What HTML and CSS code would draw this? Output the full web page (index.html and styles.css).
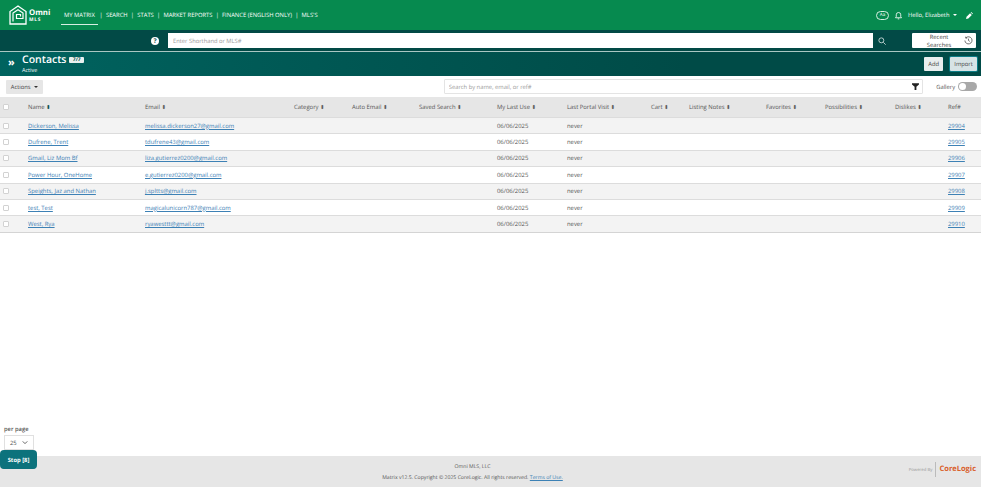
FILE: index.html
```html
<!DOCTYPE html>
<html lang="en">
<head>
  <meta charset="UTF-8" />
  <title>Contacts - Omni MLS</title>
  <link rel="stylesheet" href="styles.css">
</head>
<body>

  <!-- top nav -->
  <header class="topnav">
    <div class="logo">
      <svg class="logo-mark" viewBox="0 0 18 20" width="18" height="20" fill="none" stroke="#fff">
        <path d="M1 19V6.500L9 1l8 5.500V19Z" stroke-width="1.300"/>
        <path d="M4 16.500V8l5-3.300L14 8v5.500H7.500V9.500H11.500v2" stroke-width="1.200"/>
      </svg>
      <div class="logo-text">
        <span class="logo-omni">Omni</span>
        <span class="logo-mls">MLS</span>
      </div>
    </div>
    <nav class="mainmenu">
      <a class="active" href="#">MY MATRIX</a><i>|</i>
      <a href="#">SEARCH</a><i>|</i>
      <a href="#">STATS</a><i>|</i>
      <a href="#">MARKET REPORTS</a><i>|</i>
      <a href="#">FINANCE (ENGLISH ONLY)</a><i>|</i>
      <a href="#">MLS'S</a>
    </nav>
    <div class="usermenu">
      <span class="aa-pill">Aa</span>
      <svg viewBox="0 0 12 12" width="9" height="9" fill="none" stroke="#fff" stroke-width="1.100">
        <path d="M2 9h8L9 7.500V5a3 3 0 0 0-6 0v2.500Z"/>
        <path d="M5 10.500h2"/>
      </svg>
      <span class="hello">Hello, Elizabeth <b class="caret"></b></span>
      <svg class="pen" viewBox="0 0 12 12" width="7" height="7" fill="#fff">
        <path d="M0 12l1-4 6-6 3 3-6 6Z"/>
        <path d="M8 1l1-1 3 3-1 1Z"/>
      </svg>
    </div>
  </header>

  <!-- shorthand bar -->
  <div class="searchbar">
    <span class="help">?</span>
    <input class="shorthand" placeholder="Enter Shorthand or MLS#" />
    <svg class="lens" viewBox="0 0 12 12" width="8" height="8" fill="none" stroke="#cfdedd" stroke-width="1.300">
      <circle cx="5" cy="5" r="3.700"/>
      <path d="M8 8l3.500 3.500"/>
    </svg>
    <button class="recent">Recent Searches
      <svg viewBox="0 0 12 12" width="9" height="9" fill="none" stroke="#444" stroke-width="1">
        <path d="M2.500 2.500A4.800 4.800 0 1 1 1.200 6"/>
        <path d="M2.300 .8v2h2M6 3.500V6l1.800 1.200"/>
      </svg>
    </button>
  </div>

  <!-- title -->
  <section class="titlebar">
    <span class="chevrons">»</span>
    <div class="title-text">
      <h1>Contacts <span class="count">7/7</span></h1>
      <p>Active</p>
    </div>
    <div class="title-btns">
      <button class="btn-light">Add</button>
      <button class="btn-light btn-focus">Import</button>
    </div>
  </section>

  <div class="toolbar">
    <button class="actions">Actions <b class="caret caret-dark"></b></button>
    <div class="filterbox">
      <input placeholder="Search by name, email, or ref#" />
    </div>
    <svg class="funnel" viewBox="0 0 10 10" width="7" height="7" fill="#222">
      <path d="M0 .5h10v1.500L6.300 5.500V10H3.700V5.500L0 2Z"/>
    </svg>
    <span class="gallery-label">Gallery</span>
    <span class="toggle"><span class="knob"></span></span>
  </div>

  <main class="content">
    <table class="contacts">
      <colgroup>
        <col class="c-check"><col class="c-name"><col class="c-email"><col class="c-cat">
        <col class="c-auto"><col class="c-saved"><col class="c-use"><col class="c-portal">
        <col class="c-cart"><col class="c-notes"><col class="c-fav"><col class="c-poss">
        <col class="c-dis"><col class="c-ref">
      </colgroup>
      <thead>
        <tr>
          <th><span class="box"></span></th>
          <th>Name <span class="sort sort-on">⬍</span></th>
          <th>Email <span class="sort">⬍</span></th>
          <th>Category <span class="sort">⬍</span></th>
          <th>Auto Email <span class="sort">⬍</span></th>
          <th>Saved Search <span class="sort">⬍</span></th>
          <th>My Last Use <span class="sort">⬍</span></th>
          <th>Last Portal Visit <span class="sort">⬍</span></th>
          <th>Cart <span class="sort">⬍</span></th>
          <th>Listing Notes <span class="sort">⬍</span></th>
          <th>Favorites <span class="sort">⬍</span></th>
          <th>Possibilities <span class="sort">⬍</span></th>
          <th>Dislikes <span class="sort">⬍</span></th>
          <th>Ref#</th>
        </tr>
      </thead>
      <tbody>
        <tr>
          <td><span class="box"></span></td><td><a href="#">Dickerson, Melissa</a></td><td><a href="#">melissa.dickerson27@gmail.com</a></td>
          <td></td><td></td><td></td><td>06/06/2025</td><td>never</td><td></td><td></td><td></td><td></td><td></td><td><a href="#">29904</a></td>
        </tr>
        <tr>
          <td><span class="box"></span></td><td><a href="#">Dufrene, Trent</a></td><td><a href="#">tdufrene43@gmail.com</a></td>
          <td></td><td></td><td></td><td>06/06/2025</td><td>never</td><td></td><td></td><td></td><td></td><td></td><td><a href="#">29905</a></td>
        </tr>
        <tr>
          <td><span class="box"></span></td><td><a href="#">Gmail, Liz Mom Bf</a></td><td><a href="#">liza.gutierrez0200@gmail.com</a></td>
          <td></td><td></td><td></td><td>06/06/2025</td><td>never</td><td></td><td></td><td></td><td></td><td></td><td><a href="#">29906</a></td>
        </tr>
        <tr>
          <td><span class="box"></span></td><td><a href="#">Power Hour, OneHome</a></td><td><a href="#">e.gutierrez0200@gmail.com</a></td>
          <td></td><td></td><td></td><td>06/06/2025</td><td>never</td><td></td><td></td><td></td><td></td><td></td><td><a href="#">29907</a></td>
        </tr>
        <tr>
          <td><span class="box"></span></td><td><a href="#">Speights, Jaz and Nathan</a></td><td><a href="#">j.spltts@gmail.com</a></td>
          <td></td><td></td><td></td><td>06/06/2025</td><td>never</td><td></td><td></td><td></td><td></td><td></td><td><a href="#">29908</a></td>
        </tr>
        <tr>
          <td><span class="box"></span></td><td><a href="#">test, Test</a></td><td><a href="#">magicalunicorn787@gmail.com</a></td>
          <td></td><td></td><td></td><td>06/06/2025</td><td>never</td><td></td><td></td><td></td><td></td><td></td><td><a href="#">29909</a></td>
        </tr>
        <tr>
          <td><span class="box"></span></td><td><a href="#">West, Rya</a></td><td><a href="#">ryawesttt@gmail.com</a></td>
          <td></td><td></td><td></td><td>06/06/2025</td><td>never</td><td></td><td></td><td></td><td></td><td></td><td><a href="#">29910</a></td>
        </tr>
      </tbody>
    </table>

    <div class="perpage">
      <label>per page</label>
      <div class="perpage-select">25
        <svg viewBox="0 0 8 6" width="6" height="5" fill="none" stroke="#555" stroke-width="1.200"><path d="M1 1.500l3 3 3-3"/></svg>
      </div>
    </div>
  </main>

  <footer class="pagefoot">
    <span class="ghost">Matrix</span>
    <div class="foot-center">
      <p>Omni MLS, LLC</p>
      <p>Matrix v12.5. Copyright © 2025 CoreLogic. All rights reserved. <a href="#">Terms of Use.</a></p>
    </div>
    <div class="powered">
      <span class="powered-by">Powered By</span>
      <span class="corelogic">CoreLogic</span>
    </div>
  </footer>

  <button class="stop">Stop [8]</button>

</body>
</html>
```

FILE: styles.css
```css
/* RESET */
* {
  margin: 0;
  padding: 0;
  box-sizing: border-box;
}

html, body {
  width: 100%;
  height: 100%;
  overflow: hidden;
}

body {
  display: flex;
  flex-direction: column;
  position: relative;
  background-color: #fff;
  color: #555;
  font-family: "Open Sans", "Liberation Sans", sans-serif;
  font-size: 5.900px;
  text-rendering: geometricPrecision;
}

a {
  color: #3d81b5;
}

button, input {
  font-family: inherit;
  text-rendering: geometricPrecision;
}

.caret {
  display: inline-block;
  width: 0;
  height: 0;
  margin-left: 2px;
  vertical-align: middle;
  border-left: 2px solid transparent;
  border-right: 2px solid transparent;
  border-top: 2px solid #fff;
}
.caret-dark {
  border-top-color: #333;
}

/* TOP NAV */
.topnav {
  flex: 0 0 30px;
  display: flex;
  align-items: center;
  padding-left: 9px;
  padding-right: 8px;
  background-color: #068a4f;
  color: #fff;
}
.logo {
  display: flex;
  align-items: center;
  gap: 2px;
  width: 52px;
}
.logo-text {
  display: flex;
  flex-direction: column;
  line-height: 1;
  padding-top: 3px;
}
.logo-omni {
  font-size: 7.800px;
  font-weight: 700;
}
.logo-mls {
  font-size: 4.800px;
  font-weight: 700;
  letter-spacing: 0.8px;
}
.mainmenu {
  display: flex;
  align-items: center;
  font-size: 5.850px;
}
.mainmenu a {
  color: #fff;
  text-decoration: none;
  padding: 6px 0 5px;
  border-bottom: 1px solid transparent;
}
.mainmenu a.active {
  padding-left: 3px;
  padding-right: 3px;
  margin-right: -1.500px;
  border-bottom-color: #d6efe2;
}
.mainmenu i {
  font-style: normal;
  margin: 0 3.200px 1px;
}
.usermenu {
  margin-left: auto;
  display: flex;
  align-items: center;
  gap: 5px;
  font-size: 5.800px;
}
.aa-pill {
  width: 13px;
  height: 9px;
  border: 1px solid #d6efe2;
  border-radius: 5px;
  font-size: 4.500px;
  line-height: 7px;
  text-align: center;
}
.pen {
  margin-left: 4px;
}

/* SHORTHAND BAR */
.searchbar {
  flex: 0 0 22px;
  display: flex;
  align-items: center;
  padding-left: 151px;
  padding-right: 5px;
  background-color: #024a46;
  border-bottom: 1px solid #a9c7c3;
}
.help {
  width: 8px;
  height: 8px;
  margin-right: 9px;
  border-radius: 50%;
  background-color: #fff;
  color: #024a46;
  font-size: 6.500px;
  font-weight: 700;
  line-height: 8px;
  text-align: center;
}
.shorthand {
  width: 705px;
  height: 15px;
  padding-left: 5px;
  border: 0;
  font-size: 5.800px;
  background-color: #fff;
}
.shorthand::placeholder,
.filterbox input::placeholder {
  color: #9a9a9a;
  opacity: 1;
}
.lens {
  margin-left: 5px;
}
.recent {
  margin-left: auto;
  display: flex;
  align-items: center;
  gap: 3px;
  width: 64px;
  height: 15px;
  padding: 0 3px 0 5px;
  border: 0;
  border-radius: 1px;
  background-color: #fff;
  color: #444;
  font-size: 5.800px;
}

/* TITLE */
.titlebar {
  flex: 0 0 24px;
  display: flex;
  align-items: center;
  padding-left: 8px;
  padding-right: 4px;
  background: linear-gradient(to right, #00635f, #004b47 70%);
  color: #fff;
}
.chevrons {
  width: 14px;
  font-size: 11px;
  font-weight: 700;
  line-height: 1;
  margin-bottom: 4px;
}
.title-text h1 {
  font-size: 10.500px;
  font-weight: 600;
  line-height: 12px;
}
.title-text p {
  margin-top: 1px;
  font-size: 5.500px;
  line-height: 7px;
}
.count {
  display: inline-block;
  width: 15px;
  vertical-align: 2px;
  border-radius: 1px;
  background-color: #e8f0ef;
  color: #024a46;
  font-size: 5px;
  font-weight: 700;
  line-height: 6px;
  text-align: center;
}
.title-btns {
  margin-left: auto;
  display: flex;
  gap: 7px;
}
.btn-light {
  height: 14px;
  padding: 0 4px;
  border: 0;
  border-radius: 1px;
  background-color: #e9eeee;
  color: #444;
  font-size: 5.800px;
}
.btn-focus {
  width: 27px;
  background-color: #d7e3e5;
  box-shadow: 0 0 0 1px #0b7c86;
}

/* TOOLBAR */
.toolbar {
  flex: 0 0 21px;
  display: flex;
  align-items: center;
  padding-left: 6px;
  padding-right: 4px;
}
.actions {
  width: 37px;
  height: 14px;
  border: 0;
  border-radius: 1px;
  background-color: #e6e6e6;
  color: #444;
  font-size: 5.800px;
}
.filterbox {
  width: 482px;
  margin-left: 401px;
  height: 15px;
  border: 1px solid #e4e4e4;
  border-radius: 1px;
}
.filterbox input {
  width: 100%;
  height: 100%;
  padding-left: 4px;
  border: 0;
  font-size: 5.800px;
  background: transparent;
}
.funnel {
  margin-left: -11px;
}
.gallery-label {
  margin-left: 17px;
  font-size: 5.800px;
}
.toggle {
  position: relative;
  width: 19px;
  height: 9px;
  margin-left: 3px;
  border-radius: 5px;
  background-color: #a8a8a8;
}
.knob {
  position: absolute;
  left: 1px;
  top: 1px;
  width: 7px;
  height: 7px;
  border-radius: 50%;
  background-color: #fff;
}

/* TABLE */
.content {
  flex: 1;
  display: flex;
  flex-direction: column;
  min-height: 0;
}
.contacts {
  width: 100%;
  table-layout: fixed;
  border-collapse: collapse;
  border-bottom: 1px solid #d4d4d4;
}
.c-check { width: 28px; }
.c-name { width: 117px; }
.c-email { width: 149px; }
.c-cat { width: 58px; }
.c-auto { width: 67px; }
.c-saved { width: 78px; }
.c-use { width: 70px; }
.c-portal { width: 84px; }
.c-cart { width: 38px; }
.c-notes { width: 77px; }
.c-fav { width: 59px; }
.c-poss { width: 70px; }
.c-dis { width: 53px; }
.c-ref { width: 33px; }

.contacts th {
  height: 20.500px;
  background-color: #e6e6e6;
  font-weight: 400;
  text-align: left;
  white-space: nowrap;
}
.contacts td {
  height: 16.400px;
  border-top: 1px solid #dcdcdc;
  white-space: nowrap;
}
.contacts tbody tr:nth-child(odd) td {
  background-color: #f3f3f3;
}
.box {
  display: block;
  width: 6px;
  height: 6px;
  margin-left: 3px;
  border: 1px solid #d2d2d2;
  border-radius: 1px;
  background-color: #fff;
}
.sort {
  font-size: 5.500px;
  color: #555;
}
.sort-on {
  color: #024a46;
}

/* PER PAGE */
.perpage {
  margin-top: auto;
  margin-bottom: 6px;
  padding-left: 4px;
}
.perpage label {
  display: block;
  margin-bottom: 1px;
  font-size: 5.800px;
  font-weight: 600;
  line-height: 9px;
}
.perpage-select {
  display: flex;
  align-items: center;
  justify-content: space-between;
  width: 30px;
  height: 15px;
  padding: 0 5px;
  border: 1px solid #e0e0e0;
  font-size: 5.800px;
}

/* FOOTER */
.pagefoot {
  flex: 0 0 31px;
  position: relative;
  display: flex;
  align-items: center;
  background-color: #e6e6e6;
}
.ghost {
  position: absolute;
  left: 2px;
  top: 3px;
  font-size: 11px;
  line-height: 14px;
  color: #888;
}
.foot-center {
  width: 100%;
  padding-right: 36px;
  text-align: center;
  font-size: 5.150px;
  line-height: 11px;
}
.powered {
  position: absolute;
  right: 5px;
  top: 6px;
  display: flex;
  align-items: center;
  height: 15px;
}
.powered-by {
  padding-right: 3px;
  font-size: 4.300px;
  color: #999;
}
.corelogic {
  padding-left: 3px;
  border-left: 1px solid #bbb;
  font-size: 7.500px;
  font-weight: 700;
  line-height: 15px;
  color: #d9602c;
}

/* floating stop button */
.stop {
  position: absolute;
  left: 0;
  top: 450px;
  width: 37px;
  height: 19px;
  border: 0;
  border-radius: 4px;
  background-color: #0c727c;
  color: #fff;
  font-size: 5.800px;
  font-weight: 700;
}
```
